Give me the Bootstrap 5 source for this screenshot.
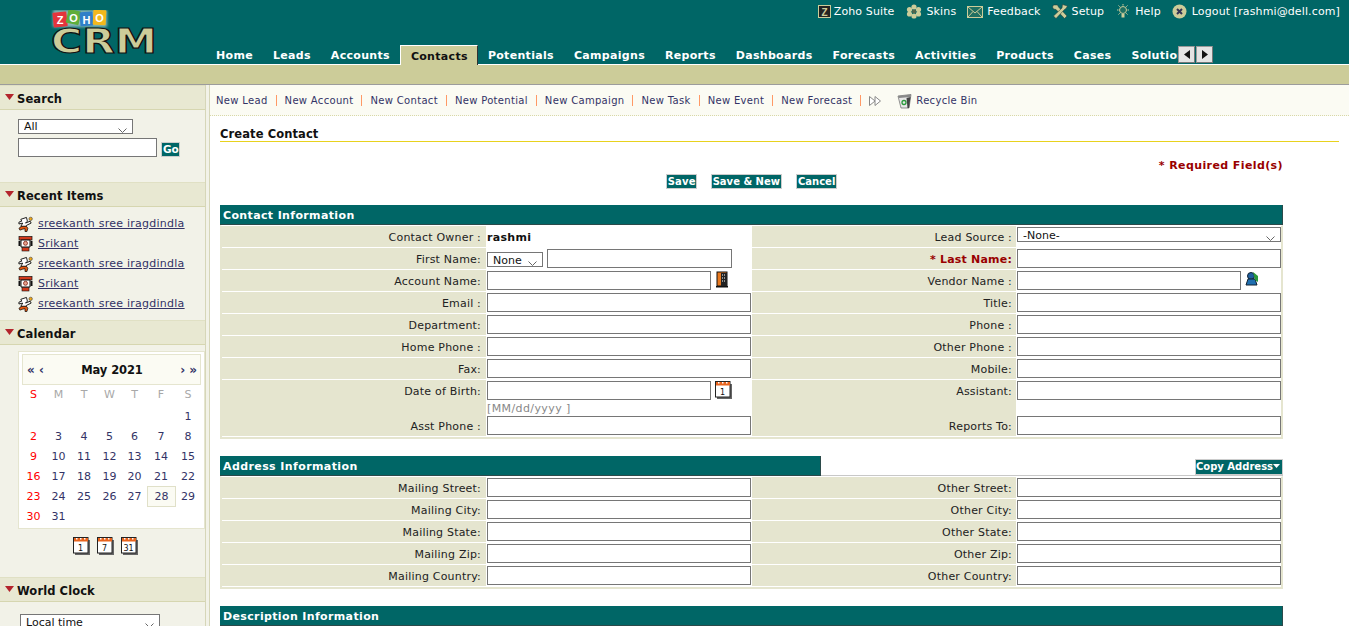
<!DOCTYPE html>
<html lang="en"><head><meta charset="utf-8"><title>Create Contact</title>
<link href="https://cdn.jsdelivr.net/npm/bootstrap@5.3.0/dist/css/bootstrap.min.css" rel="stylesheet">
<style>
html,body{height:100%;overflow:hidden;background:#fff}
body{font-family:"DejaVu Sans",Verdana,sans-serif;font-size:11px;line-height:14px;color:#111}
a{color:inherit;text-decoration:none}
input,select{font-size:11px;line-height:13px;border-radius:0;color:#111;background:#fff}
input{border:1px solid #767676;padding:0 2px;height:19px;display:block}
select{height:15px;padding:1px 14px 0 5px;border:1px solid #767676;appearance:none;-webkit-appearance:none;background:#fff url("data:image/svg+xml,%3Csvg xmlns='http://www.w3.org/2000/svg' width='9' height='5' viewBox='0 0 9 5'%3E%3Cpath d='M.5.5 4.500 4.500 8.500.5' fill='none' stroke='%23666'/%3E%3C/svg%3E") no-repeat right 5px top 8px}
.app-shell{width:1349px;height:626px;overflow:hidden}
.top-head{height:65px;background:#006666;border-bottom:1px solid #fff;color:#fff}
.logo-area{width:206px;flex:none;padding:10px 0 0 50px}
.head-main{width:1143px}
.top-links{height:45px;padding:5px 9px 0 0;gap:11px;letter-spacing:.12px}
.top-links a{display:flex;align-items:flex-start;gap:3px;line-height:14px}
.top-links svg{flex:none;margin-top:-1px}
.tabs-row{height:20px;margin-bottom:-1px}
.tabs-clip{width:972px;overflow:hidden;height:20px;display:flex;padding-left:0;white-space:nowrap}
.tab-item{font-weight:700;padding:4px 10px 0;height:19px;flex:none;letter-spacing:.31px}
.tab-on{background:#cccc99;color:#111;border-top:1px solid #fff;border-left:1px solid #fff;border-right:1px solid #333;height:20px;padding:4px 0 0 10px;width:78px}
.scroll-btn{width:17px;height:17px;background:#e4e4e4;border:1px solid #999;border-right-color:#777;border-bottom-color:#777;margin:1px 1px 0 0;padding:0;display:flex;align-items:center;justify-content:center}
.tan-band{height:20px;background:#cccc99;border-bottom:1px solid #9c9c9c}
.body-row{height:541px}
.side-col{width:210px;flex:none;background:#f2f2e8;border-right:1px solid #d6d6b8;position:relative;overflow:hidden}
.side-in{width:206px;border-right:1px solid #d6d6b8;height:100%}
.side-head{height:25px;background:#e8e8d2;border-top:1px solid #e0e0c4;border-bottom:1px solid #d6d6b0;font-weight:700;font-size:11.5px;color:#111;padding:6px 0 0 5px;gap:3px;display:flex;letter-spacing:.1px}
.side-head svg{margin-top:2px}
.search-pane{height:72px;padding:9px 0 0 18px}
.search-pane select{width:115px;display:block;margin-bottom:4px;padding-top:0}
.search-pane input{width:139px;height:19px}
.go-btn{background:#006666;color:#fff;font-weight:700;border:1px solid #ccc;font-size:10.5px;padding:0 1px;width:19px;height:15px;line-height:13px;margin:4px 0 0 4px;text-align:center;display:block}
.recent-pane{height:113px;padding:7px 0 0 18px}
.recent-line{height:20px;gap:5px;align-items:center;display:flex;color:#333366;letter-spacing:.25px}
.recent-line a{text-decoration:underline;color:#333366}
.cal-pane{height:232px;padding:6px 0 0 18px}
.cal-box{width:187px;height:178px;background:#fff;border:1px solid #e5e5cf;padding:2px 3px}
.cal-title{height:31px;border:1px solid #e5e5cf;background:#fbfbf3;color:#333366;font-weight:700;padding:0 3px 0 4px;font-size:12px}
.cal-title b{color:#111;font-size:11.5px;letter-spacing:-.1px}
.cal-grid{display:grid;margin-left:-1px;grid-template-columns:25px 25px 26px 25px 25px 28px 26px;grid-template-rows:22px;grid-auto-rows:20px;text-align:center;color:#333366;line-height:20px;font-size:11px}
.cal-dow{color:#a8a8a8}.cal-sun{color:#f00}.cal-now{background:#fbfbf3;border:1px solid #e0e0c8;line-height:19px;width:29px;height:21px;margin-top:-1px}
.cal-start{grid-column-start:7}
.cal-icons{gap:7px;padding:8px 0 0 55px}
.zone-pane{padding:12px 0 0 20px}
.zone-pane select{width:140px;display:block}
.main-col{width:1139px}
.tool-bar{height:31px;background:#fbfbf3;border-bottom:1px dotted #d8d8a8;padding:1px 0 0 6px;color:#333366;font-size:10px;letter-spacing:.32px;align-items:center;display:flex}
.tool-bar a{white-space:nowrap}
.tool-sep{width:1px;height:11px;background:#ff9966;margin:0 8px}
.form-wrap{padding:0 0 0 10px}
.page-title{font-size:11.5px;letter-spacing:.1px;font-weight:700;color:#111;width:1119px;border-bottom:1px solid #e8d21e;height:26px;padding-top:10px;line-height:16px}
.req-line{width:1063px;text-align:right;color:#990000;font-weight:700;height:16px;margin-top:17px;letter-spacing:.4px}
.act-line{width:1063px;gap:14px;height:16px;margin-top:-1px}
.act-btn{background:#006666;color:#fff;font-weight:700;border:1px solid #ccc;font-size:10px;line-height:13px;height:15px;padding:0 1px}
.act-save{width:31px;letter-spacing:.2px}
.sec-head{width:1063px;height:20px;background:#006666;color:#fff;font-weight:700;padding:4px 0 0 3px;border-right:1px solid #2b4a4a;border-bottom:1px solid #2b4a4a;font-size:11px;letter-spacing:.36px}
.first-sec{margin-top:15px}
.form-tbl{width:1063px;border:2px solid #e5e5cf;border-top:1px solid #fff;padding-top:0;margin-bottom:17px}
.form-line{display:grid;grid-template-columns:265px 265px 265px 264px;height:22px;border-bottom:1px solid #fff}
.form-tall{height:35px}
.lbl-cell{background:#e5e5cf;text-align:right;padding:5px 5px 0 0;margin-right:1px;color:#222;white-space:nowrap;letter-spacing:.2px}
.form-line .lbl-cell:nth-child(3){padding-right:4px}
.val-cell{padding-top:1px;color:#111}
.val-full{width:264px}
.val-full-r{width:264px}
.val-short{width:224px}
.name-sel{width:56px;margin-top:3px}
.name-inp{width:185px;margin-left:4px}
.lead-sel{width:264px;margin-top:0}
.own-val{padding-top:5px;letter-spacing:.3px;font-weight:700}
.hint-txt{color:#888;font-size:11px;letter-spacing:.4px;line-height:14px;padding-top:2px}
.req-lbl{color:#990000;font-weight:700}
.addr-bar{width:1063px;height:20px;border-bottom:1px solid #c8c8c8}
.addr-title{width:601px;height:20px;background:#006666;color:#fff;font-weight:700;padding:4px 0 0 3px;border-right:1px solid #2b4a4a;border-bottom:1px solid #2b4a4a;letter-spacing:.4px}
.copy-btn{background:#006666;color:#fff;font-weight:700;border:1px solid #ccc;font-size:10px;line-height:14px;height:16px;width:88px;padding-left:0;margin-top:3px;white-space:nowrap}
.blank-col{width:17px}
.sym-defs{width:0;height:0;position:absolute}
</style></head>
<body>
<svg class="sym-defs" aria-hidden="true"><defs>
<symbol id="i-arrow" viewBox="0 0 9 6"><path d="M0 0H9L4.500 6Z" fill="#b3242c"/></symbol>
<symbol id="i-lead" viewBox="0 0 16 16"><path d="M3 3 9 1 10 5 8 7 13 5 14 7 9 9.500 9 10.500H3L5 7 1 8 1 6 4 5Z" fill="#fff" stroke="#111"/><path d="M4 10.500H9L10.500 12.500 9.500 16H7.500L7.500 13 5 13.500 2 14.500 1 12.500Z" fill="#e4570f" stroke="#111" stroke-width=".8"/><circle cx="13.500" cy="2.500" r="1.800" fill="#f0a818" stroke="#333" stroke-width=".6"/></symbol>
<symbol id="i-cont" viewBox="0 0 14 16"><rect x=".5" y=".5" width="13" height="3.500" fill="#d23a1c" stroke="#111" stroke-width=".7"/><path d="M2.500 4H11.500V11H2.500Z" fill="#fff" stroke="#111"/><rect x="0" y="5" width="2" height="5" fill="#111"/><rect x="12" y="5" width="2" height="5" fill="#111"/><circle cx="7" cy="7.300" r="2" fill="#e8a08c" stroke="#802010" stroke-width=".8"/><rect x="3.500" y="11.500" width="7" height="3.500" fill="#d23a1c" stroke="#111" stroke-width=".6"/></symbol>
<symbol id="i-cal" viewBox="0 0 17 18"><rect x="2" y="3" width="15" height="15" fill="#666"/><rect x=".5" y=".5" width="14.500" height="15.500" fill="#fff" stroke="#222"/><rect x="1" y="1" width="14" height="3.500" fill="#e8641e"/><rect x="3" y="1" width="1.500" height="1.500" fill="#fff"/><rect x="7" y="1" width="1.500" height="1.500" fill="#fff"/><rect x="11" y="1" width="1.500" height="1.500" fill="#fff"/></symbol>
</defs></svg>

<div class="d-flex">
<div class="app-shell">
  <header class="top-head d-flex">
    <div class="logo-area">
      <svg width="110" height="46" viewBox="0 0 110 46" aria-label="Zoho CRM">
        <defs><filter id="glow" x="-20%" y="-40%" width="140%" height="180%"><feGaussianBlur stdDeviation="1.800"/></filter></defs>
        <rect x="3" y="0" width="54" height="17" fill="#fff" opacity=".55" filter="url(#glow)"/>
        <rect x="3" y="2" width="14" height="15" rx="1" fill="#e4343c" transform="rotate(-6 10 9)"/>
        <rect x="17" y="0" width="13" height="14" rx="1" fill="#5fae3a" transform="rotate(12 23 7)"/>
        <rect x="30" y="2" width="13" height="14" rx="1" fill="#2f7fc8" transform="rotate(-4 36 9)"/>
        <rect x="43" y="0" width="13" height="15" rx="1" fill="#f4b81c" transform="rotate(3 49 8)"/>
        <g font-family="'Liberation Sans',sans-serif" font-weight="700" font-size="11" fill="#fff" text-anchor="middle"><text x="10" y="14">Z</text><text x="23.500" y="11.500">O</text><text x="36.500" y="13.500">H</text><text x="49.500" y="12">O</text></g>
        <text x="1" y="43" font-family="'DejaVu Sans',sans-serif" font-weight="700" font-size="33" fill="#cccc99" stroke="#111" stroke-width="1.200" textLength="106" lengthAdjust="spacingAndGlyphs">CRM</text>
      </svg>
    </div>
    <div class="head-main">
      <div class="top-links d-flex justify-content-end">
        <a href="#"><svg width="13" height="14" viewBox="0 0 13 14"><rect x=".5" y="1.500" width="12" height="12" fill="#222" stroke="#cccc99"/><text x="6.500" y="11.500" font-size="10" font-weight="700" text-anchor="middle" fill="#cccc99" font-family="'Liberation Sans',sans-serif">Z</text></svg>Zoho Suite</a>
        <a href="#" style="gap:5px"><svg width="16" height="15" viewBox="0 0 16 15"><g fill="#cccc99"><circle cx="8" cy="3" r="2.600"/><circle cx="8" cy="12" r="2.600"/><circle cx="3.500" cy="5.500" r="2.600"/><circle cx="12.500" cy="5.500" r="2.600"/><circle cx="3.500" cy="10" r="2.600"/><circle cx="12.500" cy="10" r="2.600"/></g><circle cx="8" cy="7.500" r="2" fill="#55664a"/></svg>Skins</a>
        <a href="#" style="gap:4px"><svg width="16" height="14" viewBox="0 0 16 14"><rect x=".5" y="2.500" width="15" height="11" fill="#1f6f62" stroke="#cccc99"/><path d="M1 3 8 9 15 3M1 13 6 7.500M15 13 10 7.500" fill="none" stroke="#cccc99"/></svg>Feedback</a>
        <a href="#" style="gap:4px"><svg width="16" height="15" viewBox="0 0 16 15"><path d="M1.500 1 5.500 1 6.500 3 15 12 12.500 14.500 4 5.500 1.500 5 0.500 3Z" fill="#cccc99" stroke="#233" stroke-width=".5"/><path d="M10.500 .5 15.500 2 14 4.500 12.500 5.500 4 14.500 1.500 12 10 4Z" fill="#cccc99" stroke="#233" stroke-width=".5"/></svg>Setup</a>
        <a href="#" style="gap:4px"><svg width="16" height="15" viewBox="0 0 16 15"><circle cx="8" cy="6" r="3.500" fill="#1f6f62" stroke="#cccc99"/><rect x="6.500" y="10" width="3" height="3.500" fill="#cccc99"/><path d="M8 0V1.500M2 6H3.500M12.500 6H14M3.500 1.500 4.700 2.700M12.500 1.500 11.300 2.700M3.500 10.500 4.700 9.300M12.500 10.500 11.300 9.300" stroke="#cccc99"/></svg>Help</a>
        <a href="#" style="gap:5px"><svg width="15" height="15" viewBox="0 0 15 15"><circle cx="7.500" cy="7.500" r="7" fill="#cccc99"/><path d="M5 5 10 10M10 5 5 10" stroke="#335" stroke-width="2"/></svg>Logout [rashmi@dell.com]</a>
      </div>
      <nav class="tabs-row d-flex">
        <div class="tabs-clip">
          <a class="tab-item" href="#">Home</a><a class="tab-item" href="#">Leads</a><a class="tab-item" href="#">Accounts</a><a class="tab-item tab-on" href="#">Contacts</a><a class="tab-item" href="#">Potentials</a><a class="tab-item" href="#">Campaigns</a><a class="tab-item" href="#">Reports</a><a class="tab-item" href="#">Dashboards</a><a class="tab-item" href="#">Forecasts</a><a class="tab-item" href="#">Activities</a><a class="tab-item" href="#">Products</a><a class="tab-item" href="#">Cases</a><a class="tab-item" href="#">Solutions</a>
        </div>
        <button class="scroll-btn" type="button" aria-label="Previous"><svg width="6" height="9" viewBox="0 0 6 9"><path d="M6 0V9L0 4.500Z" fill="#111"/></svg></button>
        <button class="scroll-btn" type="button" aria-label="Next"><svg width="6" height="9" viewBox="0 0 6 9"><path d="M0 0V9L6 4.500Z" fill="#111"/></svg></button>
      </nav>
    </div>
  </header>
  <div class="tan-band"></div>
  <div class="body-row d-flex">
    <aside class="side-col">
      <div class="side-in">
        <div class="side-head"><svg width="9" height="6"><use href="#i-arrow"/></svg>Search</div>
        <div class="search-pane">
          <select aria-label="Search in"><option>All</option></select>
          <div class="d-flex"><input type="text" aria-label="Search"><span class="go-btn">Go</span></div>
        </div>
        <div class="side-head"><svg width="9" height="6"><use href="#i-arrow"/></svg>Recent Items</div>
        <div class="recent-pane">
          <div class="recent-line"><svg width="15" height="16"><use href="#i-lead"/></svg><a href="#">sreekanth sree iragdindla</a></div>
          <div class="recent-line"><svg width="15" height="16"><use href="#i-cont"/></svg><a href="#">Srikant</a></div>
          <div class="recent-line"><svg width="15" height="16"><use href="#i-lead"/></svg><a href="#">sreekanth sree iragdindla</a></div>
          <div class="recent-line"><svg width="15" height="16"><use href="#i-cont"/></svg><a href="#">Srikant</a></div>
          <div class="recent-line"><svg width="15" height="16"><use href="#i-lead"/></svg><a href="#">sreekanth sree iragdindla</a></div>
        </div>
        <div class="side-head"><svg width="9" height="6"><use href="#i-arrow"/></svg>Calendar</div>
        <div class="cal-pane">
          <div class="cal-box">
            <div class="cal-title d-flex align-items-center justify-content-between"><span>«&nbsp;‹</span><b>May 2021</b><span>›&nbsp;»</span></div>
            <div class="cal-grid">
              <span class="cal-sun">S</span><span class="cal-dow">M</span><span class="cal-dow">T</span><span class="cal-dow">W</span><span class="cal-dow">T</span><span class="cal-dow">F</span><span class="cal-dow">S</span>
              <span class="cal-start">1</span>
              <span class="cal-sun">2</span><span>3</span><span>4</span><span>5</span><span>6</span><span>7</span><span>8</span>
              <span class="cal-sun">9</span><span>10</span><span>11</span><span>12</span><span>13</span><span>14</span><span>15</span>
              <span class="cal-sun">16</span><span>17</span><span>18</span><span>19</span><span>20</span><span>21</span><span>22</span>
              <span class="cal-sun">23</span><span>24</span><span>25</span><span>26</span><span>27</span><span class="cal-now">28</span><span>29</span>
              <span class="cal-sun">30</span><span>31</span>
            </div>
          </div>
          <div class="cal-icons d-flex">
            <svg width="17" height="18" viewBox="0 0 17 18"><use href="#i-cal"/><text x="7.500" y="13.500" font-size="8" text-anchor="middle" fill="#111">1</text></svg>
            <svg width="17" height="18" viewBox="0 0 17 18"><use href="#i-cal"/><text x="7.500" y="13.500" font-size="8" text-anchor="middle" fill="#111">7</text></svg>
            <svg width="17" height="18" viewBox="0 0 17 18"><use href="#i-cal"/><text x="7.500" y="13.500" font-size="8" text-anchor="middle" fill="#111">31</text></svg>
          </div>
        </div>
        <div class="side-head"><svg width="9" height="6"><use href="#i-arrow"/></svg>World Clock</div>
        <div class="zone-pane"><select aria-label="Time zone"><option>Local time</option></select></div>
      </div>
    </aside>
    <main class="main-col">
      <div class="tool-bar">
        <a href="#">New Lead</a><i class="tool-sep"></i><a href="#">New Account</a><i class="tool-sep"></i><a href="#">New Contact</a><i class="tool-sep"></i><a href="#">New Potential</a><i class="tool-sep"></i><a href="#">New Campaign</a><i class="tool-sep"></i><a href="#">New Task</a><i class="tool-sep"></i><a href="#">New Event</a><i class="tool-sep"></i><a href="#">New Forecast</a><i class="tool-sep"></i>
        <svg class="ms-0" width="12" height="10" viewBox="0 0 12 10"><path d="M.5.500 6 5 .5 9.500ZM6 .5 11.500 5 6 9.500Z" fill="#fff" stroke="#888"/></svg>
        <svg class="ms-3" width="15" height="16" viewBox="0 0 15 16"><path d="M1 3 14 1.500 12 15H4Z" fill="#e8e8e8" stroke="#666" stroke-width=".7"/><path d="M1 3 14 1.500 13.500 4 2 5Z" fill="#888"/><path d="M9.500 5 10.500 15H12L13.500 4Z" fill="#444"/><circle cx="7" cy="9.500" r="2" fill="none" stroke="#2a9a3a" stroke-width="1.300"/></svg>
        <a class="ms-1" href="#">Recycle Bin</a>
      </div>
      <div class="form-wrap">
        <div class="page-title">Create Contact</div>
        <div class="req-line">* Required Field(s)</div>
        <div class="act-line d-flex justify-content-center"><button class="act-btn act-save" type="button">Save</button><button class="act-btn" type="button">Save &amp; New</button><button class="act-btn" type="button">Cancel</button></div>

        <div class="sec-head first-sec">Contact Information</div>
        <div class="form-tbl">
          <div class="form-line"><div class="lbl-cell">Contact Owner :</div><div class="val-cell own-val">rashmi</div><div class="lbl-cell">Lead Source :</div><div class="val-cell"><select class="lead-sel" aria-label="Lead Source"><option>-None-</option></select></div></div>
          <div class="form-line"><div class="lbl-cell">First Name:</div><div class="val-cell d-flex"><select class="name-sel" aria-label="Salutation"><option>None</option></select><input class="name-inp" type="text" aria-label="First Name"></div><div class="lbl-cell req-lbl">* Last Name:</div><div class="val-cell"><input class="val-full-r" type="text" aria-label="Last Name"></div></div>
          <div class="form-line"><div class="lbl-cell">Account Name:</div><div class="val-cell d-flex gap-1"><input class="val-short" type="text" aria-label="Account Name"><svg width="14" height="17" viewBox="0 0 14 17"><rect x="2" y="1" width="10" height="14" fill="#e8781e" stroke="#111"/><rect x="6" y="2" width="6" height="13" fill="#222"/><path d="M7 4H11M7 7H11M7 10H11" stroke="#fff" stroke-dasharray="1 1"/><rect x="1" y="15" width="12" height="1.500" fill="#111"/></svg></div><div class="lbl-cell">Vendor Name :</div><div class="val-cell d-flex gap-1"><input class="val-short" type="text" aria-label="Vendor Name"><svg width="14" height="16" viewBox="0 0 14 16"><circle cx="6" cy="5" r="3.500" fill="#1f5f9f" stroke="#123"/><path d="M1 14 3 8H10L12 14Z" fill="#1f6fb0" stroke="#123"/><path d="M8 1 13 5 13 11 10 9Z" fill="#2a9a3a"/></svg></div></div>
          <div class="form-line"><div class="lbl-cell">Email :</div><div class="val-cell"><input class="val-full" type="text" aria-label="Email"></div><div class="lbl-cell">Title:</div><div class="val-cell"><input class="val-full-r" type="text" aria-label="Title"></div></div>
          <div class="form-line"><div class="lbl-cell">Department:</div><div class="val-cell"><input class="val-full" type="text" aria-label="Department"></div><div class="lbl-cell">Phone :</div><div class="val-cell"><input class="val-full-r" type="text" aria-label="Phone"></div></div>
          <div class="form-line"><div class="lbl-cell">Home Phone :</div><div class="val-cell"><input class="val-full" type="text" aria-label="Home Phone"></div><div class="lbl-cell">Other Phone :</div><div class="val-cell"><input class="val-full-r" type="text" aria-label="Other Phone"></div></div>
          <div class="form-line"><div class="lbl-cell">Fax:</div><div class="val-cell"><input class="val-full" type="text" aria-label="Fax"></div><div class="lbl-cell">Mobile:</div><div class="val-cell"><input class="val-full-r" type="text" aria-label="Mobile"></div></div>
          <div class="form-line form-tall"><div class="lbl-cell">Date of Birth:</div><div class="val-cell"><div class="d-flex gap-1"><input class="val-short" type="text" aria-label="Date of Birth"><svg width="17" height="18" viewBox="0 0 17 18"><use href="#i-cal"/><text x="7.500" y="13.500" font-size="8" text-anchor="middle" fill="#111">1</text></svg></div><div class="hint-txt">[MM/dd/yyyy ]</div></div><div class="lbl-cell">Assistant:</div><div class="val-cell"><input class="val-full-r" type="text" aria-label="Assistant"></div></div>
          <div class="form-line"><div class="lbl-cell">Asst Phone :</div><div class="val-cell"><input class="val-full" type="text" aria-label="Asst Phone"></div><div class="lbl-cell">Reports To:</div><div class="val-cell"><input class="val-full-r" type="text" aria-label="Reports To"></div></div>
        </div>

        <div class="addr-bar d-flex justify-content-between"><div class="addr-title">Address Information</div><div class="copy-btn">Copy Address<svg class="align-top mt-1" width="7" height="4" viewBox="0 0 7 4"><path d="M0 0H7L3.500 4Z" fill="#fff"/></svg></div></div>
        <div class="form-tbl">
          <div class="form-line"><div class="lbl-cell">Mailing Street:</div><div class="val-cell"><input class="val-full" type="text" aria-label="Mailing Street"></div><div class="lbl-cell">Other Street:</div><div class="val-cell"><input class="val-full-r" type="text" aria-label="Other Street"></div></div>
          <div class="form-line"><div class="lbl-cell">Mailing City:</div><div class="val-cell"><input class="val-full" type="text" aria-label="Mailing City"></div><div class="lbl-cell">Other City:</div><div class="val-cell"><input class="val-full-r" type="text" aria-label="Other City"></div></div>
          <div class="form-line"><div class="lbl-cell">Mailing State:</div><div class="val-cell"><input class="val-full" type="text" aria-label="Mailing State"></div><div class="lbl-cell">Other State:</div><div class="val-cell"><input class="val-full-r" type="text" aria-label="Other State"></div></div>
          <div class="form-line"><div class="lbl-cell">Mailing Zip:</div><div class="val-cell"><input class="val-full" type="text" aria-label="Mailing Zip"></div><div class="lbl-cell">Other Zip:</div><div class="val-cell"><input class="val-full-r" type="text" aria-label="Other Zip"></div></div>
          <div class="form-line"><div class="lbl-cell">Mailing Country:</div><div class="val-cell"><input class="val-full" type="text" aria-label="Mailing Country"></div><div class="lbl-cell">Other Country:</div><div class="val-cell"><input class="val-full-r" type="text" aria-label="Other Country"></div></div>
        </div>

        <div class="sec-head">Description Information</div>
      </div>
    </main>
  </div>
</div>
<div class="blank-col"></div>
</div>
<script src="https://cdn.jsdelivr.net/npm/bootstrap@5.3.0/dist/js/bootstrap.bundle.min.js"></script>
</body></html>
